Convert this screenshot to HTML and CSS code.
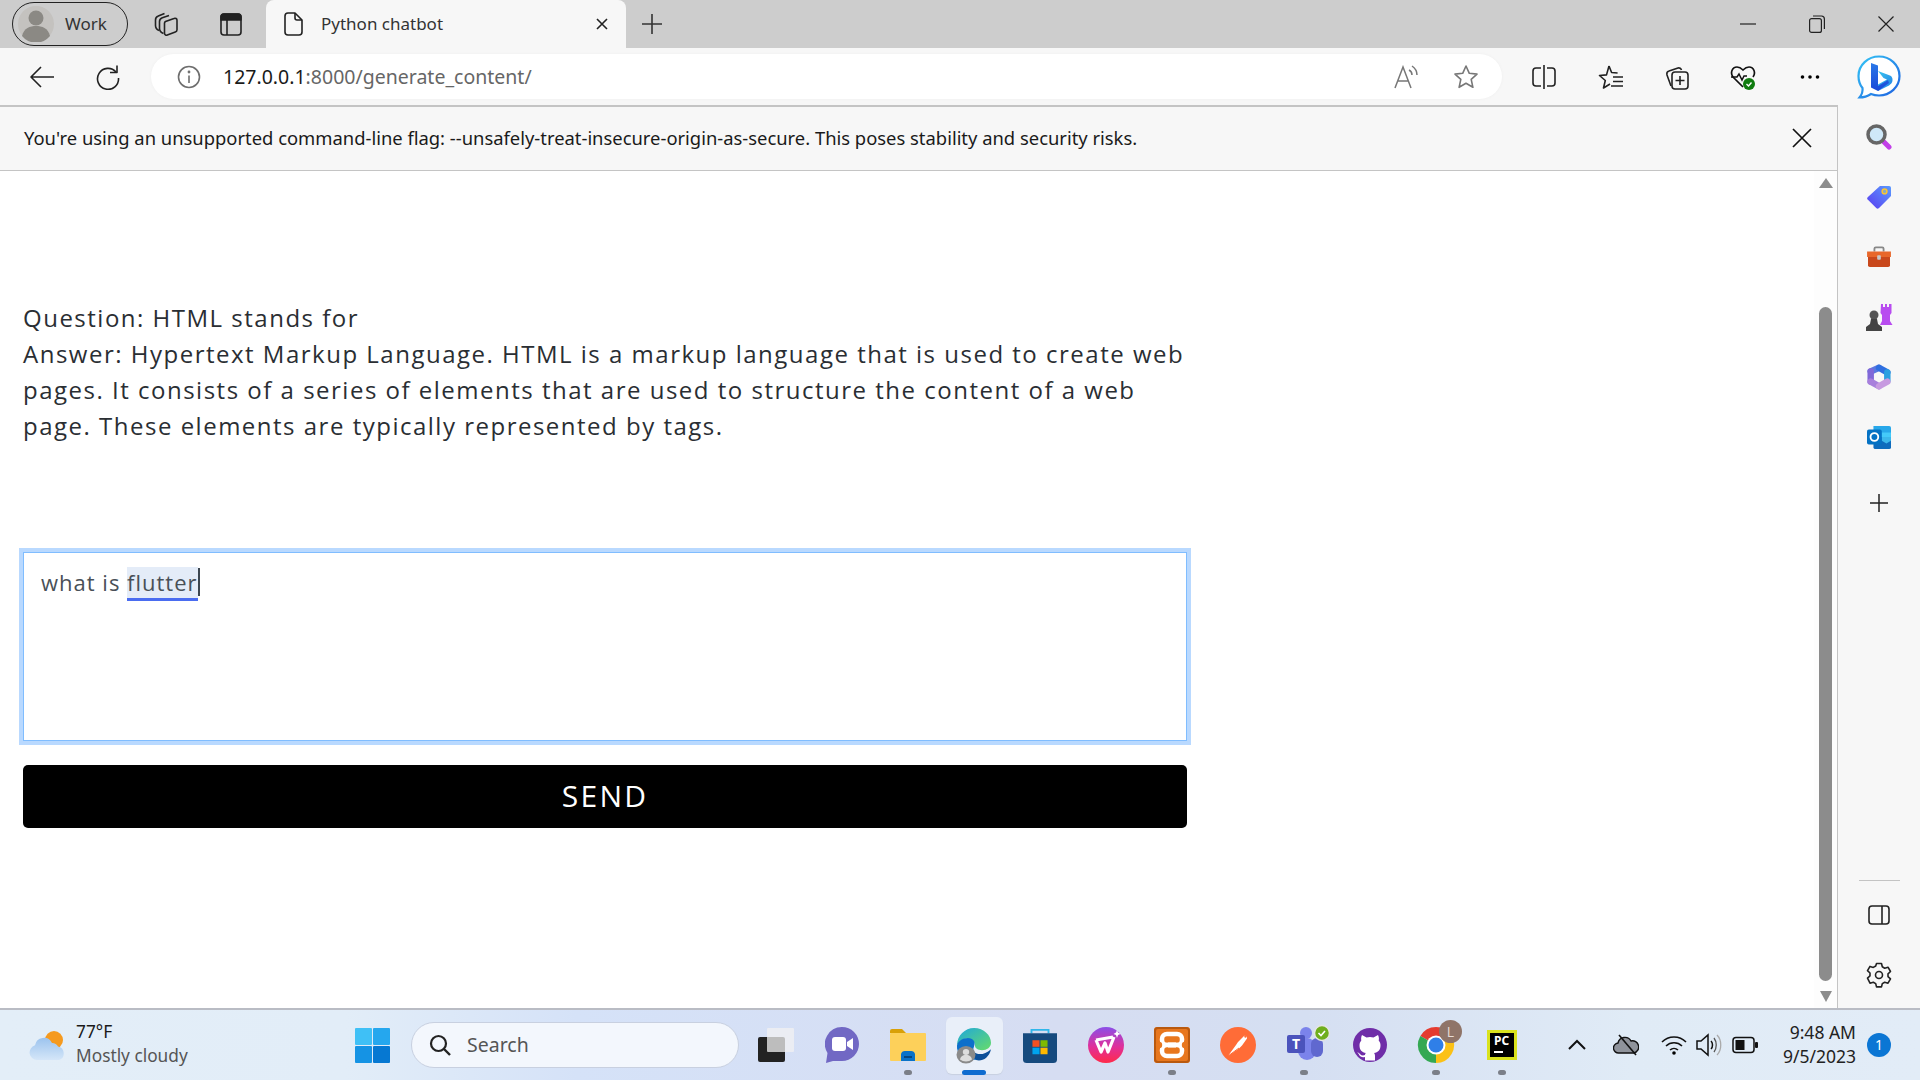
FILE: index.html
```html
<!DOCTYPE html>
<html lang="en">
<head>
  <meta charset="UTF-8">
  <title>Python chatbot</title>
  <link rel="stylesheet" href="styles.css">
</head>
<body>
  <svg class="defs" width="0" height="0">
    <defs>
      <linearGradient id="g-edge" x1="0" y1="0" x2="1" y2="1"><stop offset="0" stop-color="#1fa7dc"/><stop offset="1" stop-color="#66dc6a"/></linearGradient>
      <linearGradient id="g-wps" x1="0" y1="0" x2="0" y2="1"><stop offset="0" stop-color="#8a4fe8"/><stop offset=".55" stop-color="#e0309a"/><stop offset="1" stop-color="#ff2a4a"/></linearGradient>
      <linearGradient id="g-ring" x1="0" y1="0" x2="1" y2="1"><stop offset="0" stop-color="#35c5f5"/><stop offset="1" stop-color="#1d5fe0"/></linearGradient>
      <linearGradient id="g-stem" x1="0" y1="0" x2="0" y2="1"><stop offset="0" stop-color="#2a78e8"/><stop offset="1" stop-color="#1a48d8"/></linearGradient>
      <linearGradient id="g-swoosh" x1="0" y1="0" x2="1" y2="1"><stop offset="0" stop-color="#3cc8ee"/><stop offset="1" stop-color="#1f7de6"/></linearGradient>
      <linearGradient id="g-tag" x1="1" y1="0" x2="0" y2="1"><stop offset="0" stop-color="#5a9bff"/><stop offset="1" stop-color="#5a3cf0"/></linearGradient>
      <linearGradient id="g-cloud" x1="0" y1="0" x2="0" y2="1"><stop offset="0" stop-color="#9cc3ee"/><stop offset="1" stop-color="#d4e6f8"/></linearGradient>
    </defs>
  </svg>

  <div class="tabstrip">
    <div class="profile">
      <svg class="avatar" width="36" height="36" viewBox="0 0 36 36"><circle cx="18" cy="18" r="18" fill="#c4c2bf"/><circle cx="18" cy="12" r="7.5" fill="#8b8984"/><path d="M4 30c2-8 8-10 14-10s12 2 14 10a18 18 0 0 1-28 0z" fill="#8b8984"/></svg>
      <span>Work</span>
    </div>
    <div class="strip-btn">
      <svg width="26" height="26" viewBox="0 0 26 26" class="ico"><path d="M11.500 10.500l8.500-3a2 2 0 0 1 3 1.900v9.300a2.500 2.500 0 0 1-1.700 2.300l-8 3a2 2 0 0 1-2.800-1.900v-9.800a2 2 0 0 1 1-1.800z"/><path d="M9.500 22.500c-2.500-1-4-2.500-4-5v-7c0-1.800 1-3 2.800-3.700L15 4.500"/><path d="M5 19.500c-2.300-1-3.500-2.600-3.500-5V9c0-2 1-3.200 2.800-3.900L10.500 2.500"/></svg>
    </div>
    <div class="strip-btn">
      <svg width="24" height="26" viewBox="0 0 24 26" class="ico"><rect x="2" y="3" width="20" height="21" rx="3"/><path d="M2 9V6a3 3 0 0 1 3-3h14a3 3 0 0 1 3 3v3z" fill="#222"/><path d="M8 9v15"/></svg>
    </div>
    <div class="tab">
      <svg width="20" height="26" viewBox="0 0 20 26" class="ico"><path d="M4 2h7l7 7v12a3 3 0 0 1-3 3H4a3 3 0 0 1-3-3V5a3 3 0 0 1 3-3z"/><path d="M11 2v5a2 2 0 0 0 2 2h5"/></svg>
      <span class="tab-title">Python chatbot</span>
      <svg class="tab-close" width="14" height="14" viewBox="0 0 14 14"><path d="M2 2l10 10M12 2 2 12" stroke="#222" stroke-width="1.600"/></svg>
    </div>
    <svg class="new-tab" width="24" height="24" viewBox="0 0 24 24"><path d="M12 2v20M2 12h20" stroke="#333" stroke-width="1.600"/></svg>
    <div class="win-btns">
      <div class="win-btn"><svg width="16" height="16" viewBox="0 0 16 16"><path d="M0 8h16" stroke="#222" stroke-width="1.200"/></svg></div>
      <div class="win-btn"><svg width="16" height="18" viewBox="0 0 16 18"><rect x=".6" y="3.600" width="11.800" height="13.800" rx="2" fill="none" stroke="#222" stroke-width="1.200"/><path d="M4 1h8.500A3 3 0 0 1 15.400 4v10" fill="none" stroke="#222" stroke-width="1.200"/></svg></div>
      <div class="win-btn"><svg width="16" height="16" viewBox="0 0 16 16"><path d="M.5.500l15 15M15.500.500l-15 15" stroke="#222" stroke-width="1.200"/></svg></div>
    </div>
  </div>

  <div class="toolbar">
    <div class="tool-btn"><svg width="26" height="24" viewBox="0 0 26 24" class="ico"><path d="M25 12H2M12 2 2 12l10 10"/></svg></div>
    <div class="tool-btn"><svg width="26" height="26" viewBox="0 0 26 26" class="ico"><path d="M21 8a10.500 10.500 0 1 0 2.500 6"/><path d="M22 1.500V8.500h-7"/></svg></div>
    <div class="address">
      <svg width="24" height="24" viewBox="0 0 24 24" class="ico-grey"><circle cx="12" cy="12" r="10.500"/><path d="M12 10.500V18"/><circle cx="12" cy="7" r=".6"/></svg>
      <span class="url"><b>127.0.0.1</b>:8000/generate_content/</span>
      <svg class="read-aloud" width="26" height="24" viewBox="0 0 26 24"><path d="M1 23 9 2l8 21M4 16h10" fill="none" stroke="#777" stroke-width="1.500"/><path d="M15 5c2 1 3 3 3 5M18 1c3 2 5 5 5 9" fill="none" stroke="#777" stroke-width="1.500"/></svg>
      <svg class="star" width="26" height="26" viewBox="0 0 26 26"><path d="M13 2l3.300 7.300 7.700.8-5.800 5.200 1.700 8L13 19.200l-6.900 4.100 1.700-8L2 10.100l7.700-.8z" fill="none" stroke="#777" stroke-width="1.600" stroke-linejoin="round"/></svg>
    </div>
    <div class="tool-right">
      <div class="tool-btn"><svg width="24" height="26" viewBox="0 0 24 26" class="ico"><path d="M9 4H4a3 3 0 0 0-3 3v12a3 3 0 0 0 3 3h5M15 4h5a3 3 0 0 1 3 3v12a3 3 0 0 1-3 3h-5M12 1v24"/></svg></div>
      <div class="tool-btn"><svg width="26" height="26" viewBox="0 0 26 26" class="ico"><path d="M11 2l2.600 6.500 6 .5M12 20l-6.500 4 1.800-7.500L1.500 11.500l7-.6L11 2"/><path d="M15 13h10M15 17.500h10M13 22h12"/></svg></div>
      <div class="tool-btn"><svg width="26" height="28" viewBox="0 0 26 28" class="ico"><path d="M7 23 3 12c-.5-2 0-3.500 2-4l9-3c1.500-.5 3 .5 3.500 2"/><rect x="8" y="9" width="16" height="17" rx="3"/><path d="M16 13v9M11.500 17.500h9"/></svg></div>
      <div class="tool-btn"><svg width="26" height="28" viewBox="0 0 26 28"><path d="M13 24 3 14C0 10 2 4 7 4c3 0 5 2 6 3 1-1 3-3 6-3 5 0 7 6 4 10" fill="none" stroke="#111" stroke-width="1.700"/><path d="M1 14h6l2-3 3 6 2-4h3" fill="none" stroke="#111" stroke-width="1.500"/><circle cx="19" cy="21" r="6" fill="#107c10"/><path d="M16.500 21l2 2 3-3.500" fill="none" stroke="#fff" stroke-width="1.400"/></svg></div>
      <div class="tool-btn"><svg width="20" height="6" viewBox="0 0 20 6"><circle cx="2.500" cy="3" r="1.800"/><circle cx="10" cy="3" r="1.800"/><circle cx="17.500" cy="3" r="1.800"/></svg></div>
      <div class="bing">
        <svg width="46" height="46" viewBox="0 0 46 46"><path d="M23 2.500c11 0 20.500 8.500 20.500 19.500S34 41.500 23 41.500c-3 0-5.500-.5-8-1.500-3 2-7 3.500-11.500 3.500C5.500 41 7 37.500 6.500 34 3.500 30.500 2.500 26 2.500 22 2.500 11 12 2.500 23 2.500z" fill="#fff" stroke="url(#g-ring)" stroke-width="2.200"/><path d="M22 17l12 4.500c2 1 2.500 2.500 2.500 4.500 0 2.500-1.500 4-3.500 5.500L22 37l-1-6 10-5.500-3.500-1.500z" fill="url(#g-swoosh)"/><path d="M15 9l7 2.500V32l10-6 1 3-11 8-7-3.500z" fill="url(#g-stem)"/></svg>
      </div>
    </div>
  </div>

  <div class="workarea">
    <div class="main">
      <div class="infobar">
        <span>You're using an unsupported command-line flag: --unsafely-treat-insecure-origin-as-secure. This poses stability and security risks.</span>
        <svg width="20" height="20" viewBox="0 0 20 20"><path d="M1 1l18 18M19 1 1 19" stroke="#111" stroke-width="1.700"/></svg>
      </div>
      <div class="viewport">
        <div class="page">
          <div class="chat-log">
            <p>Question: HTML stands for</p>
            <p>Answer: Hypertext Markup Language. HTML is a markup language that is used to create web pages. It consists of a series of elements that are used to structure the content of a web page. These elements are typically represented by tags.</p>
          </div>
          <div class="prompt">what is <span class="composing">flutter</span><span class="caret"></span></div>
          <button class="send">SEND</button>
        </div>
        <div class="scrollbar">
          <div class="arrow-up"></div>
          <div class="thumb"></div>
          <div class="arrow-down"></div>
        </div>
      </div>
    </div>

    <div class="sidebar">
      <div class="side-btn"><svg width="26" height="26" viewBox="0 0 26 26"><path d="M16 16l7 7" stroke="#c23fe8" stroke-width="5" stroke-linecap="round"/><circle cx="10.500" cy="10.500" r="8.500" fill="#cfe8f8" stroke="#666" stroke-width="3.500"/></svg></div>
      <div class="side-btn"><svg width="24" height="24" viewBox="0 0 26 26"><path d="M14 1h10a2 2 0 0 1 2 2v9L13 25a2 2 0 0 1-3 0L1 16a2 2 0 0 1 0-3z" fill="url(#g-tag)"/><circle cx="19" cy="7" r="2.600" fill="#8ab" stroke="#fdc52e" stroke-width="1.600"/></svg></div>
      <div class="side-btn"><svg width="28" height="22" viewBox="0 0 28 24"><path d="M9 6V3a1.500 1.500 0 0 1 1.500-1.500h7A1.500 1.500 0 0 1 19 3v3" fill="none" stroke="#888" stroke-width="2"/><rect x="1" y="6" width="26" height="6" fill="#e8672a"/><path d="M2 12h24v9a2 2 0 0 1-2 2H4a2 2 0 0 1-2-2z" fill="#c8481c"/><rect x="12" y="10" width="4" height="5" rx="1" fill="#c8c8c8"/></svg></div>
      <div class="side-btn"><svg width="28" height="28" viewBox="0 0 28 28"><path d="M16 1h2v3h2V1h2v3h2V1h2.500v9L25 12v6l2.500 4H15l2-4v-6l-1.500-2z" fill="#b84cf0"/><circle cx="9" cy="12" r="4.500" fill="#555"/><path d="M6 16h6l1 5 4 3v4H1v-4l4-3z" fill="#444"/></svg></div>
      <div class="side-btn"><svg width="24" height="26" viewBox="0 0 26 28"><g fill="none" stroke-width="7" stroke-linecap="round"><path d="M4 8 13 4" stroke="#5b78e0"/><path d="M13 4l9 5" stroke="#2f6fe0"/><path d="M22 9v9" stroke="#2aa0e0"/><path d="M4 19V8" stroke="#8068d8"/><path d="M4 19l9 5" stroke="#a87fdc"/><path d="M13 24l9-5" stroke="#c79ae0"/></g></svg></div>
      <div class="side-btn"><svg width="24" height="24" viewBox="0 0 26 26"><path d="M7 1h17a2 2 0 0 1 2 2v10H7z" fill="#28a8ea"/><path d="M7 13h19v11a2 2 0 0 1-2 2H9a2 2 0 0 1-2-2z" fill="#0f6cbd"/><path d="M16 8h10v9l-5 3-5-3z" fill="#50d9ff" opacity=".7"/><rect y="5" width="16" height="16" rx="2" fill="#0572c4"/><circle cx="8" cy="13" r="4.200" fill="none" stroke="#fff" stroke-width="2"/></svg></div>
      <div class="side-btn side-plus"><svg width="18" height="18" viewBox="0 0 18 18"><path d="M9 0v18M0 9h18" stroke="#222" stroke-width="1.500"/></svg></div>
      <div class="side-fill"></div>
      <div class="side-line"></div>
      <div class="side-btn"><svg width="22" height="20" viewBox="0 0 22 20" class="ico"><rect x="1" y="1" width="20" height="18" rx="3"/><path d="M14 1v18"/></svg></div>
      <div class="side-btn"><svg width="26" height="26" viewBox="0 0 26 26" class="ico"><path d="M10.500 1.500h5l.8 3.300 2.400 1.400 3.300-1 2.500 4.300-2.500 2.300v2.800l2.500 2.300-2.500 4.300-3.300-1-2.400 1.400-.8 3.300h-5l-.8-3.300-2.400-1.400-3.300 1L1.500 16.100 4 13.800V11L1.500 8.700 4 4.400l3.300 1 2.400-1.400z"/><circle cx="13" cy="13" r="3.500"/></svg></div>
    </div>
  </div>

  <div class="taskbar">
    <div class="weather">
      <svg width="36" height="30" viewBox="0 0 36 30"><circle cx="25" cy="10" r="9" fill="#f59a1f"/><path d="M8 30a7.500 7.500 0 0 1-2-14.700A9 9 0 0 1 23 13a6.500 6.500 0 0 1 6 3.500A7 7 0 0 1 30 30z" fill="url(#g-cloud)"/></svg>
      <div class="weather-text">
        <div class="temp">77°F</div>
        <div class="sky">Mostly cloudy</div>
      </div>
    </div>
    <svg class="start" width="35" height="35" viewBox="0 0 35 35"><rect width="17" height="17" rx="1" fill="#3fc0f6"/><rect x="18" width="17" height="17" rx="1" fill="#25a7ee"/><rect y="18" width="17" height="17" rx="1" fill="#1593e4"/><rect x="18" y="18" width="17" height="17" rx="1" fill="#0678d2"/></svg>
    <div class="search">
      <svg width="24" height="24" viewBox="0 0 24 24"><circle cx="10.500" cy="10.500" r="7.500" fill="none" stroke="#222" stroke-width="2.200"/><path d="M16 16l6 6" stroke="#222" stroke-width="2.400"/></svg>
      <span>Search</span>
    </div>
    <div class="apps">
      <div class="app"><svg width="36" height="34" viewBox="0 0 36 34"><rect y="9" width="27" height="25" rx="2" fill="#222"/><rect x="9" width="27" height="24" rx="1" fill="#f2f2f2" opacity=".75"/></svg></div>
      <div class="app"><svg width="34" height="36" viewBox="0 0 34 36"><path d="M17 0a17 17 0 0 1 0 34H8l-7 2 1.500-10A17 17 0 0 1 17 0z" fill="#7168c4"/><rect x="7" y="10" width="14" height="14" rx="3" fill="#fff"/><path d="M22 15l6-4v12l-6-4z" fill="#fff"/></svg></div>
      <div class="app has-dot"><svg width="36" height="32" viewBox="0 0 36 32"><path d="M0 2a2 2 0 0 1 2-2h10l4 4H0z" fill="#d9a008"/><rect y="4" width="36" height="28" rx="1" fill="#fdd05a"/><path d="M11 25a4 4 0 0 1 4-3h6a4 4 0 0 1 4 3v7H11z" fill="#0a72c8"/><rect x="14" y="27" width="8" height="2" fill="#08467f"/></svg></div>
      <div class="app app-active">
        <svg width="36" height="37" viewBox="0 0 36 40" preserveAspectRatio="none"><path d="M1 20C1 9 9 1 18 1c10 0 17 8 17 16 0 5-4 8-9 8-4 0-7-2-7-5 0-6-7-9-11-7-3 1-6 4-7 7z" fill="url(#g-edge)"/><path d="M1 20c1-5 6-8 11-8 5 0 8 4 6 9-2 5 0 11 7 13-13 5-25-3-24-14z" fill="#0d6fcb"/><path d="M18 27c3 3 10 4 17-3-2 9-8 13-14 12-3-1-4-5-3-9z" fill="#0c4f99"/><circle cx="10" cy="30" r="9.500" fill="#8a8a8a"/><circle cx="10" cy="27" r="3.200" fill="#ddd"/><path d="M4 35c1-4 4-5 6-5s5 1 6 5a9 9 0 0 1-12 0z" fill="#ddd"/></svg>
        <i class="dot-on"></i>
      </div>
      <div class="app"><svg width="34" height="35" viewBox="0 0 36 40" preserveAspectRatio="none"><path d="M9 6V2h18v4" fill="none" stroke="#30b6ea" stroke-width="2"/><path d="M0 6h36v30a4 4 0 0 1-4 4H4a4 4 0 0 1-4-4z" fill="#164a7e"/><rect x="10" y="14" width="7.500" height="7.500" fill="#f25022"/><rect x="18.500" y="14" width="7.500" height="7.500" fill="#7fba00"/><rect x="10" y="22.500" width="7.500" height="7.500" fill="#00a4ef"/><rect x="18.500" y="22.500" width="7.500" height="7.500" fill="#ffb900"/></svg></div>
      <div class="app"><svg width="36" height="36" viewBox="0 0 36 36"><circle cx="18" cy="18" r="18" fill="url(#g-wps)"/><path d="M8 13l17-3M8 13l5 12 4-9 3 9 6-15" fill="none" stroke="#fff" stroke-width="3.200" stroke-linejoin="round"/><path d="M29 3l1 2.500L32.500 7 30 8l-1 3-1-3-2.500-1L28 5.500z" fill="#fff"/></svg></div>
      <div class="app has-dot"><svg width="36" height="36" viewBox="0 0 36 36"><rect width="36" height="36" rx="3" fill="#e8771e"/><rect x="1" y="1" width="34" height="34" rx="3" fill="none" stroke="#b9590f" stroke-width="2"/><g fill="#e8771e" stroke="#fff" stroke-width="4.500"><rect x="8" y="7" width="20" height="11" rx="5"/><rect x="8" y="18" width="20" height="11" rx="5"/></g><rect x="14" y="15.500" width="8" height="5" fill="#fff"/><circle cx="5" cy="18" r="3.200" fill="#e8771e"/><circle cx="31" cy="18" r="3.200" fill="#e8771e"/></svg></div>
      <div class="app"><svg width="36" height="36" viewBox="0 0 36 36"><circle cx="18" cy="18" r="18" fill="#ff6c37"/><path d="M8 29l8-11 2-3 6-6c2-1 3.500.5 3 2.500l-5 7-3 3z" fill="#fff"/><path d="M8 29l11-8" stroke="#ff6c37" stroke-width="1"/><circle cx="25.500" cy="9.500" r="1.200" fill="#ff6c37"/></svg></div>
      <div class="app has-dot"><svg class="over" width="34" height="36" viewBox="0 0 34 36"><circle cx="19" cy="6" r="6" fill="#7b83eb"/><rect x="11" y="11" width="18" height="22" rx="9" fill="#7b83eb"/><rect x="24" y="11" width="12" height="19" rx="6" fill="#6068cf"/><rect y="8" width="18" height="18" rx="2" fill="#4b53bc"/><text x="9" y="22" class="t-letter">T</text><circle cx="35" cy="6" r="7.500" fill="#6fae1d" stroke="#e5e5e5" stroke-width="1.500"/><path d="M31.500 6l2.500 2.500 4-4.500" fill="none" stroke="#fff" stroke-width="1.600"/></svg></div>
      <div class="app"><svg width="34" height="34" viewBox="0 0 34 34"><circle cx="17" cy="17" r="17" fill="#6f2da8"/><path d="M9 7l4.500 2.500a11 11 0 0 1 7 0L25 7c1 2 1.200 4 .7 5.500 1.300 1.500 1.800 3 1.800 5 0 4.500-2.500 7-6.500 7.500.7.700 1 1.500 1 3v4.500h-10V29c-3 .7-5-.3-6-2.500-.5-1-1.200-1.800-2-2 1.500-.3 2.500.7 3.200 1.800 1 1.200 2.800 1.500 4.800.8 0-1 .4-1.800 1-2.200-4-.5-6.500-3-6.500-7.500 0-2 .5-3.500 1.800-5C8 11 8 9 9 7z" fill="#fff"/></svg></div>
      <div class="app has-dot"><svg class="over" width="36" height="36" viewBox="0 0 36 36"><path d="M18 18 2.400 9A18 18 0 0 1 33.600 9z" fill="#e53b30"/><path d="M18 18 33.600 9A18 18 0 0 1 18 36z" fill="#fbc116"/><path d="M18 18V36A18 18 0 0 1 2.400 9z" fill="#34a853"/><circle cx="18" cy="18" r="9.500" fill="#fff"/><circle cx="18" cy="18" r="7.500" fill="#2f7fe8"/><circle cx="32.500" cy="4.500" r="11.500" fill="#8f7468"/><text x="32.500" y="9.500" class="l-letter">L</text></svg></div>
      <div class="app has-dot"><div class="pycharm"><span>PC</span><i></i></div></div>
    </div>
    <div class="tray">
      <svg class="tray-chevron" width="18" height="12" viewBox="0 0 18 12"><path d="M1 10l8-8 8 8" fill="none" stroke="#111" stroke-width="2"/></svg>
      <svg class="tray-cloud" width="26" height="24" viewBox="0 0 26 24"><path d="M6 20a5 5 0 0 1-1-10 7 7 0 0 1 13-2 5.500 5.500 0 0 1 3 12z" fill="#8f939b" stroke="#111" stroke-width="1.400"/><path d="M6 2l17 20" stroke="#111" stroke-width="1.600"/></svg>
      <svg class="tray-wifi" width="26" height="20" viewBox="0 0 26 20"><path d="M1 7a17 17 0 0 1 24 0M5 11a11.500 11.500 0 0 1 16 0M9 15a6 6 0 0 1 8 0" fill="none" stroke="#111" stroke-width="1.600"/><circle cx="13" cy="18" r="1.800"/></svg>
      <svg class="tray-vol" width="26" height="24" viewBox="0 0 26 24"><path d="M1 8h4l7-6v20l-7-6H1z" fill="none" stroke="#111" stroke-width="1.500"/><path d="M15 8c2 2 2 6 0 8" fill="none" stroke="#111" stroke-width="1.500"/><path d="M18 5c3 4 3 10 0 14" fill="none" stroke="#555" stroke-width="1.300"/><path d="M21 2c5 5 5 15 0 20" fill="none" stroke="#aaa" stroke-width="1.300"/></svg>
      <svg class="tray-batt" width="26" height="18" viewBox="0 0 26 18"><rect x="1" y="1.500" width="21" height="15" rx="3" fill="none" stroke="#111" stroke-width="1.500"/><rect x="3.500" y="4" width="9" height="10" fill="#111"/><rect x="23" y="6" width="3" height="6" rx="1" fill="#111"/></svg>
      <div class="clock"><div>9:48 AM</div><div>9/5/2023</div></div>
      <div class="badge">1</div>
    </div>
  </div>
</body>
</html>
```
FILE: styles.css
```css
* {
  box-sizing: border-box;
}

body {
  margin: 0;
  width: 1920px;
  height: 1080px;
  overflow: hidden;
  display: flex;
  flex-direction: column;
  font-family: "Noto Sans", "Open Sans", sans-serif;
  color: #1a1a1a;
  background: #fff;
}

.defs {
  position: absolute;
}

.ico {
  fill: none;
  stroke: #222;
  stroke-width: 1.600;
  stroke-linejoin: round;
}

.ico-grey {
  fill: none;
  stroke: #6e6e6e;
  stroke-width: 1.600;
}

.over {
  overflow: visible;
}

/* tab strip */
.tabstrip {
  height: 48px;
  flex: none;
  display: flex;
  align-items: center;
  background: #cdcdcd;
}

.profile {
  width: 116px;
  height: 44px;
  margin: 0 7px 0 12px;
  padding-left: 5px;
  display: flex;
  align-items: center;
  gap: 11px;
  border: 1.500px solid #222;
  border-radius: 22px;
  font-size: 17px;
  color: #333;
}

.profile span {
  padding-bottom: 2px;
}

.strip-btn {
  width: 64px;
  display: flex;
  justify-content: center;
}

.tab {
  width: 360px;
  height: 48px;
  margin-left: 3px;
  padding: 0 17px 0 18px;
  display: flex;
  align-items: center;
  background: #f7f7f7;
  border-radius: 8px 8px 0 0;
}

.tab-title {
  margin-left: 17px;
  padding-bottom: 2px;
  flex: 1;
  font-size: 17px;
  color: #333;
}

.new-tab {
  margin-left: 14px;
}

.win-btns {
  margin-left: auto;
  display: flex;
}

.win-btn {
  width: 69px;
  display: flex;
  justify-content: center;
  align-items: center;
}

/* toolbar */
.toolbar {
  height: 57px;
  flex: none;
  padding-left: 9px;
  display: flex;
  align-items: center;
  background: #f7f7f7;
}

.tool-btn {
  width: 66px;
  display: flex;
  justify-content: center;
  align-items: center;
}

.address {
  width: 1351px;
  height: 45px;
  margin-left: 10px;
  padding: 0 23px 0 26px;
  display: flex;
  align-items: center;
  background: #fff;
  border-radius: 23px;
  box-shadow: 0 0 3px #eee;
}

.url {
  margin-left: 22px;
  padding-bottom: 1px;
  font-size: 19.500px;
  color: #666;
}

.url b {
  font-weight: 400;
  color: #1a1a1a;
}

.read-aloud {
  margin-left: auto;
}

.star {
  margin-left: 33px;
}

.tool-right {
  margin-left: 9px;
  display: flex;
  align-items: center;
}

.tool-right .tool-btn {
  width: 66.400px;
}

.bing {
  margin-left: 13px;
  display: flex;
}

/* page area */
.workarea {
  flex: 1;
  display: flex;
  min-height: 0;
}

.main {
  flex: 1;
  display: flex;
  flex-direction: column;
  border-top: 2px solid #c4c4c4;
  border-right: 1.500px solid #c4c4c4;
}

.infobar {
  height: 64px;
  flex: none;
  padding: 0 25px 2px 24px;
  display: flex;
  align-items: center;
  justify-content: space-between;
  background: #f7f7f7;
  border-bottom: 1.500px solid #c4c4c4;
  font-size: 18.400px;
  color: #1a1a1a;
}

.viewport {
  flex: 1;
  display: flex;
  min-height: 0;
}

.page {
  flex: 1;
  padding: 129px 0 0 23px;
  font-family: "Open Sans", sans-serif;
}

.chat-log {
  width: 1170px;
  font-size: 24px;
  line-height: 36px;
  letter-spacing: 1.500px;
  color: #2a2e33;
}

.chat-log p {
  margin: 0;
}

.prompt {
  width: 1164px;
  height: 189px;
  margin-top: 108px;
  padding: 13px 17px;
  border: 1px solid #80bdff;
  box-shadow: 0 0 0 4px #b9d9ff;
  font-size: 22px;
  line-height: 33px;
  letter-spacing: 1px;
  color: #495057;
}

.composing {
  background: #e4ecf8;
  border-bottom: 3px solid #4a6cf0;
  padding-bottom: 1px;
}

.caret {
  display: inline-block;
  width: 2px;
  height: 28px;
  background: #3c4650;
  vertical-align: -5px;
}

.send {
  display: block;
  width: 1164px;
  height: 63px;
  margin-top: 24px;
  padding-bottom: 3px;
  border: none;
  border-radius: 5px;
  background: #000;
  color: #fff;
  font-family: "Open Sans", sans-serif;
  font-size: 30px;
  letter-spacing: 2.300px;
}

.scrollbar {
  width: 23px;
  flex: none;
  display: flex;
  flex-direction: column;
  align-items: center;
  background: #fdfdfd;
  padding: 7px 0 4px 0;
}

.arrow-up {
  border: 7px solid transparent;
  border-top: none;
  border-bottom: 10px solid #8c8c8c;
}

.arrow-down {
  margin-top: 10px;
  border: 6px solid transparent;
  border-bottom: none;
  border-top: 11px solid #8c8c8c;
}

.thumb {
  width: 13px;
  height: 674px;
  margin-top: 119px;
  background: #8c8c8c;
  border-radius: 7px;
}

/* edge sidebar */
.sidebar {
  width: 82px;
  flex: none;
  padding: 2px 0 3px;
  display: flex;
  flex-direction: column;
  align-items: center;
  background: #f7f7f7;
}

.side-btn {
  height: 60px;
  width: 100%;
  flex: none;
  display: flex;
  justify-content: center;
  align-items: center;
}

.side-plus {
  margin-top: 6px;
}

.side-fill {
  flex: 1;
}

.side-line {
  width: 41px;
  height: 1px;
  margin-bottom: 4px;
  background: #c4c4c4;
}

/* taskbar */
.taskbar {
  height: 72px;
  flex: none;
  display: flex;
  align-items: center;
  border-top: 2px solid #b9bcc4;
  background: linear-gradient(90deg, #e3eef8 0%, #e2edf8 18%, #d5e2f8 30%, #d6ddf2 55%, #d5dff2 68%, #e0ebf6 85%, #e2ecf7 100%);
}

.weather {
  width: 355px;
  padding-left: 29px;
  display: flex;
  align-items: center;
  gap: 11px;
}

.weather-text {
  padding-bottom: 2px;
  font-size: 17.300px;
  line-height: 24px;
}

.sky {
  color: #555;
}

.search {
  width: 328px;
  height: 46px;
  margin-left: 21px;
  padding: 0 0 0 16px;
  display: flex;
  align-items: center;
  gap: 15px;
  background: #f3f7fd;
  border: 1px solid #c8d0e0;
  border-radius: 23px;
  font-size: 19.500px;
  color: #555;
}

.search span {
  padding-bottom: 2px;
}

.start {
  flex: none;
}

.apps {
  margin-left: 4px;
  display: flex;
}

.app {
  width: 66px;
  height: 57px;
  position: relative;
  display: flex;
  justify-content: center;
  align-items: center;
}

.app-active {
  width: 57px;
  margin: 0 4.500px;
  background: #e9eff9;
  border-radius: 6px;
  box-shadow: 0 1px 1px #c8d0e0;
}

.has-dot::after {
  content: "";
  position: absolute;
  bottom: -1px;
  left: 29px;
  width: 8px;
  height: 5px;
  border-radius: 3px;
  background: #7b7f88;
}

.dot-on {
  position: absolute;
  bottom: -1px;
  left: 16px;
  width: 24px;
  height: 5px;
  border-radius: 3px;
  background: #0f6cd0;
}

.t-letter {
  font-family: "Open Sans", sans-serif;
  font-size: 14px;
  font-weight: 700;
  fill: #fff;
  text-anchor: middle;
}

.l-letter {
  font-family: "Open Sans", sans-serif;
  font-size: 14px;
  fill: #e8dcd6;
  text-anchor: middle;
}

.pycharm {
  width: 30px;
  height: 30px;
  padding: 0 0 0 4px;
  background: #000;
  border: 3px solid #d9e21d;
  color: #fff;
  font-size: 12px;
  font-weight: 700;
  line-height: 15px;
}

.pycharm span {
  display: block;
}

.pycharm i {
  display: block;
  width: 9px;
  height: 2px;
  margin-top: 3px;
  background: #fff;
}

.tray {
  margin-left: auto;
  display: flex;
  align-items: center;
  padding-right: 29px;
}

.tray-chevron {
  margin-right: 27px;
}

.tray-wifi {
  margin-left: 22px;
}

.tray-vol {
  margin-left: 9px;
}

.tray-batt {
  margin-left: 10px;
}

.clock {
  width: 98px;
  padding-bottom: 2px;
  text-align: right;
  font-size: 17.500px;
  line-height: 24px;
  color: #222;
}

.badge {
  width: 24px;
  height: 24px;
  margin-left: 11px;
  border-radius: 50%;
  background: #0b76d4;
  color: #fff;
  font-size: 14px;
  line-height: 24px;
  text-align: center;
}
```
